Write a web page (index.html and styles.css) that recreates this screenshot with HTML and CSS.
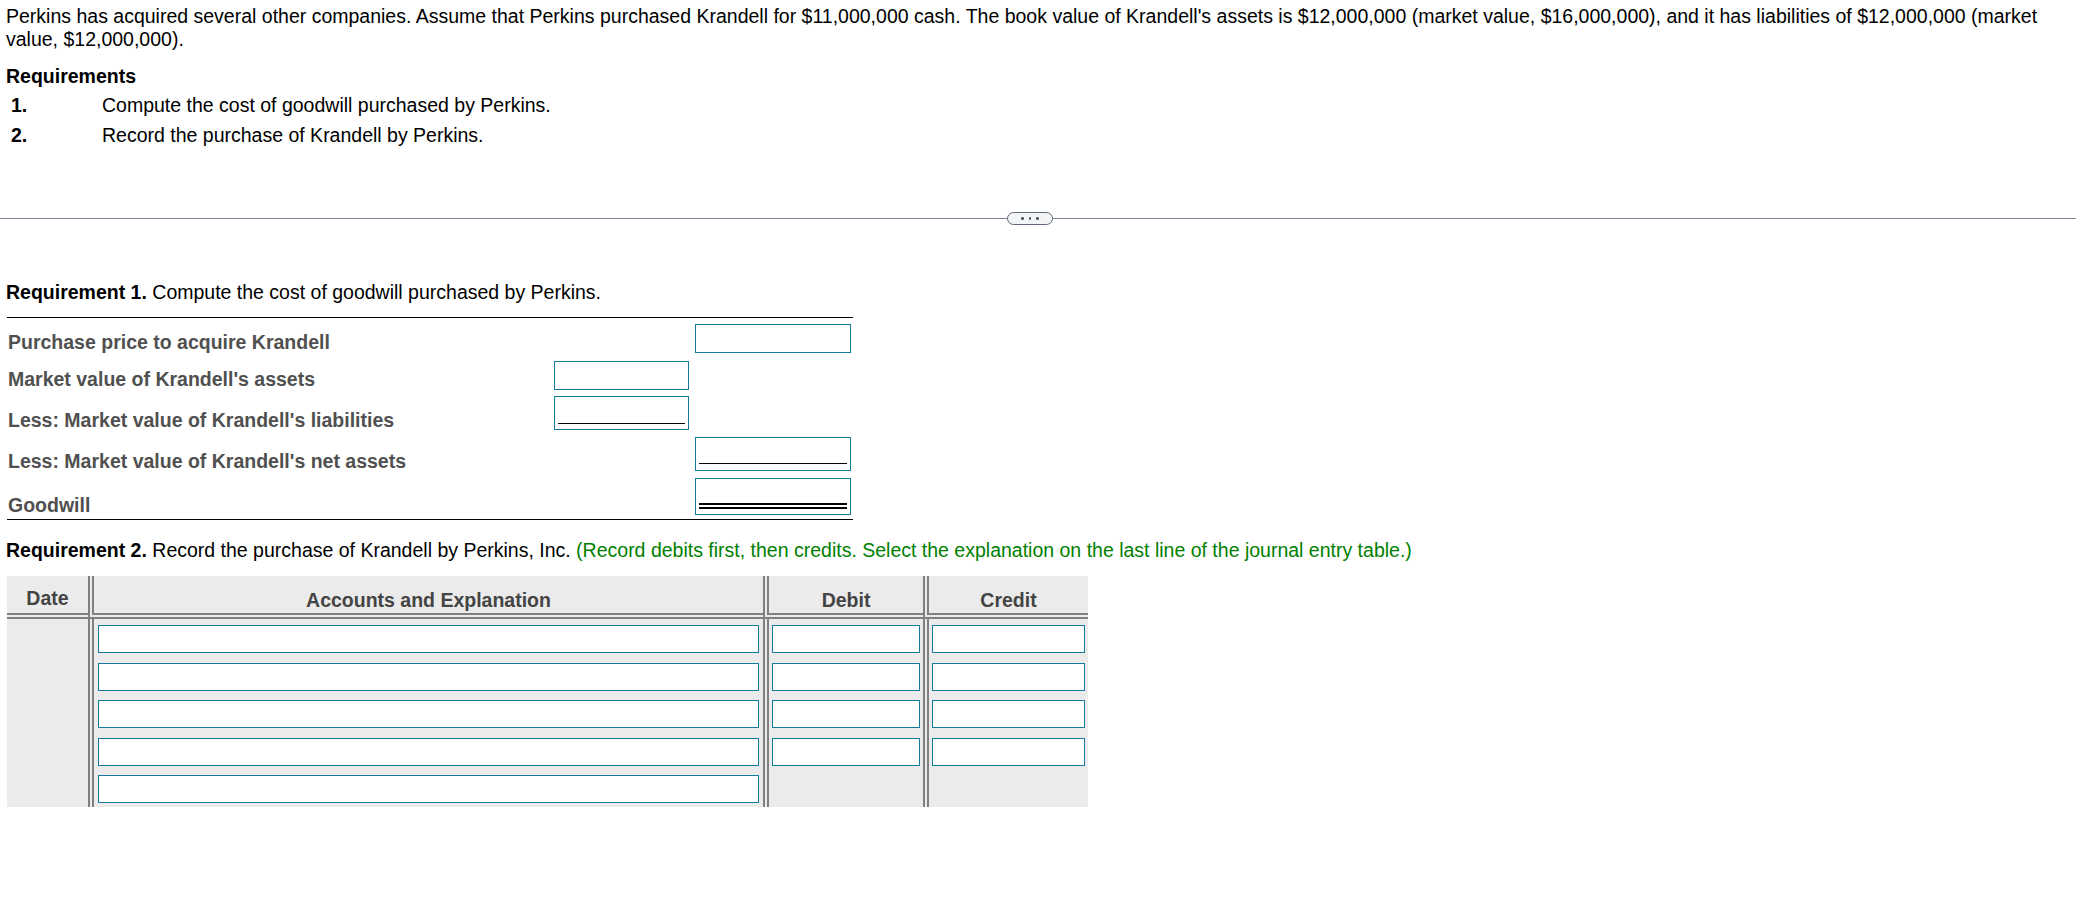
FILE: index.html
```html
<!DOCTYPE html>
<html lang="en">
<head>
<meta charset="utf-8">
<title>Goodwill – Perkins / Krandell</title>
<link rel="stylesheet" href="styles.css">
</head>
<body>
<div class="page">
  <p class="intro">Perkins has acquired several other companies. Assume that Perkins purchased Krandell for $11,000,000 cash. The book value of Krandell's assets is $12,000,000 (market value, $16,000,000), and it has liabilities of $12,000,000 (market value, $12,000,000).</p>
  <h2 class="req-title">Requirements</h2>
  <div class="req-list">
    <div class="req-num">1.</div><div class="req-text">Compute the cost of goodwill purchased by Perkins.</div>
    <div class="req-num">2.</div><div class="req-text">Record the purchase of Krandell by Perkins.</div>
  </div>
</div>

<div class="divider">
  <span class="divider-line"></span>
  <span class="pill"><i class="dot"></i><i class="dot"></i><i class="dot"></i></span>
  <span class="divider-line"></span>
</div>

<div class="page">
  <p class="req-head"><b>Requirement 1.</b> Compute the cost of goodwill purchased by Perkins.</p>

  <div class="calc">
    <div class="calc-row">
      <div class="calc-label">Purchase price to acquire Krandell</div>
      <div></div>
      <div class="box"></div>
    </div>
    <div class="calc-row row-2">
      <div class="calc-label">Market value of Krandell's assets</div>
      <div class="box"></div>
      <div></div>
    </div>
    <div class="calc-row">
      <div class="calc-label">Less: Market value of Krandell's liabilities</div>
      <div class="box box-ul"><span class="rule"></span></div>
      <div></div>
    </div>
    <div class="calc-row">
      <div class="calc-label">Less: Market value of Krandell's net assets</div>
      <div></div>
      <div class="box box-ul box-ul-r"><span class="rule"></span></div>
    </div>
    <div class="calc-row">
      <div class="calc-label">Goodwill</div>
      <div></div>
      <div class="box box-dbl"><span class="rule rule-dbl"></span></div>
    </div>
  </div>

  <p class="req-head req2"><b>Requirement 2.</b> Record the purchase of Krandell by Perkins, Inc. <span class="hint">(Record debits first, then credits. Select the explanation on the last line of the journal entry table.)</span></p>

  <div class="journal">
    <div class="jh jh-date">Date</div>
    <div class="jh sep">Accounts and Explanation</div>
    <div class="jh sep">Debit</div>
    <div class="jh sep">Credit</div>

    <div class="jc"></div>
    <div class="jc jc-acc sep"><span class="in"></span></div>
    <div class="jc jc-amt sep"><span class="in"></span></div>
    <div class="jc jc-amt sep"><span class="in"></span></div>

    <div class="jc"></div>
    <div class="jc jc-acc sep"><span class="in"></span></div>
    <div class="jc jc-amt sep"><span class="in"></span></div>
    <div class="jc jc-amt sep"><span class="in"></span></div>

    <div class="jc"></div>
    <div class="jc jc-acc sep"><span class="in"></span></div>
    <div class="jc jc-amt sep"><span class="in"></span></div>
    <div class="jc jc-amt sep"><span class="in"></span></div>

    <div class="jc"></div>
    <div class="jc jc-acc sep"><span class="in"></span></div>
    <div class="jc jc-amt sep"><span class="in"></span></div>
    <div class="jc jc-amt sep"><span class="in"></span></div>

    <div class="jc"></div>
    <div class="jc jc-acc sep"><span class="in"></span></div>
    <div class="jc jc-amt sep"></div>
    <div class="jc jc-amt sep"></div>
  </div>
</div>
</body>
</html>
```

FILE: styles.css
```css
html, body {
  margin: 0;
  padding: 0;
  background: #ffffff;
}

body {
  font-family: "Liberation Sans", Arial, Helvetica, sans-serif;
  font-size: 19.5px;
  line-height: 1.2;
  color: #000000;
}

.page {
  padding: 0 6px;
}

.intro {
  margin: 0;
  padding-top: 5px;
}

.req-title {
  margin: 13px 0 0;
  font-size: inherit;
  font-weight: bold;
}

.req-list {
  display: grid;
  grid-template-columns: 96px 1fr;
  margin-top: 2.3px;
}

.req-num,
.req-text {
  padding: 3.3px 0;
}

.req-num {
  padding-left: 5px;
  font-weight: bold;
}

/* divider with the "..." pill */
.divider {
  display: grid;
  grid-template-columns: 1007px 46px 1fr;
  align-items: center;
  height: 13px;
  margin-top: 61.5px;
}

.divider-line {
  display: block;
  height: 1px;
  background: #7d8596;
}

.pill {
  box-sizing: border-box;
  height: 13px;
  border: 1.5px solid #5f6878;
  border-radius: 7px;
  background: #f3f4f6;
  display: flex;
  align-items: center;
  justify-content: center;
  gap: 5px;
}

.dot {
  display: block;
  width: 2.5px;
  height: 2.5px;
  border-radius: 50%;
  background: #4e5665;
}

.req-head {
  margin: 56.5px 0 0;
}

.req2 {
  margin-top: 18.6px;
}

.hint {
  color: #008000;
}

/* Requirement 1 calculation */
.calc {
  width: 846px;
  box-sizing: border-box;
  margin: 12.3px 0 0 1px;
  padding: 6px 2px 3.6px 0;
  border-top: 1px solid #000000;
  border-bottom: 1px solid #000000;
  display: flex;
  flex-direction: column;
  gap: 6.6px;
}

.calc-row {
  display: grid;
  grid-template-columns: 1fr 135px 156px;
  column-gap: 6px;
  align-items: end;
}

.row-2 {
  margin-top: 2px;
}

.calc-label {
  font-weight: bold;
  color: #505050;
  padding-left: 1px;
  margin-bottom: -1.5px;
}

.box {
  box-sizing: border-box;
  height: 28.4px;
  border: 1px solid #137c9c;
  background: #ffffff;
}

.box-ul {
  height: 34.4px;
  display: flex;
  align-items: flex-end;
  padding: 0 3px 5.4px;
}

.box-ul-r {
  padding-bottom: 6px;
}

.box-dbl {
  height: 37.4px;
  display: flex;
  align-items: flex-end;
  padding: 0 3px 5px;
}

.rule {
  display: block;
  width: 100%;
  border-bottom: 1px solid #000000;
}

.rule-dbl {
  border-bottom: 6px double #000000;
}

/* Requirement 2 journal */
.journal {
  display: grid;
  grid-template-columns: 81px 675px 160px 165px;
  width: max-content;
  margin: 13.7px 0 0 1px;
  background: #ebebeb;
}

.jh {
  box-sizing: border-box;
  height: 43px;
  border-bottom: 6px double #808080;
  display: flex;
  align-items: flex-end;
  justify-content: center;
  padding-bottom: 0.2px;
  font-weight: bold;
  color: #444444;
}

.jh-date {
  padding-bottom: 2.5px;
}

.sep {
  border-left: 6px double #808080;
}

.jc {
  box-sizing: border-box;
  height: 37.6px;
  padding: 6.3px 4px 3.3px;
}

.jc-amt {
  padding-left: 3px;
  padding-right: 3px;
}

.in {
  display: block;
  box-sizing: border-box;
  height: 28px;
  border: 1px solid #137c9c;
  background: #ffffff;
}
```
